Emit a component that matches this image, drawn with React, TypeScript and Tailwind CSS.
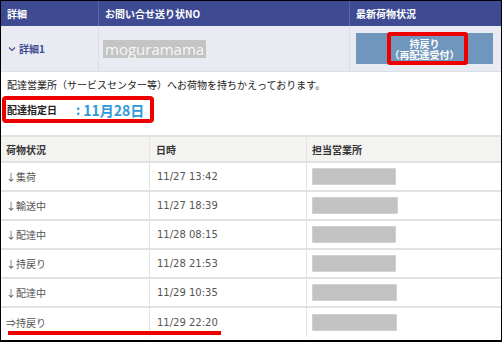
import React from 'react';

const rows = [
  { status: '↓集荷', time: '11/27 13:42', w: 84 },
  { status: '↓輸送中', time: '11/27 18:39', w: 86 },
  { status: '↓配達中', time: '11/28 08:15', w: 84 },
  { status: '↓持戻り', time: '11/28 21:53', w: 84 },
  { status: '↓配達中', time: '11/29 10:35', w: 85 },
  { status: '⇒持戻り', time: '11/29 22:20', w: 85 },
];

const App: React.FC = () => {
  return (
    <div
      className="w-[502px] h-[342px] border border-b-2 border-black bg-white overflow-hidden"
      style={{ fontFamily: '"Noto Sans CJK JP", "Noto Sans", sans-serif' }}
    >
      {/* summary table */}
      <div className="grid grid-cols-[98px_251px_1fr]">
        <div className="h-[25px] bg-[#3e4b92] border-r border-[#5865a6] text-white text-[10px] font-bold flex items-center pl-[6px]">詳細</div>
        <div className="h-[25px] bg-[#3e4b92] border-r border-[#5865a6] text-white text-[10px] font-bold flex items-center pl-[6px]">お問い合せ送り状NO</div>
        <div className="h-[25px] bg-[#3e4b92] text-white text-[10px] font-bold flex items-center pl-[6px]">最新荷物状況</div>

        <div className="h-[46px] bg-[#e9ebf3] border-r border-b border-[#dcdee6] flex items-center pl-[7px] gap-[3px] text-[10px] font-bold text-[#3e4b92]">
          <svg width="8" height="6" viewBox="0 0 8 6" fill="none" stroke="#3e4b92" strokeWidth="1.2">
            <path d="M1 1.5 L4 4.5 L7 1.5" />
          </svg>
          <span>詳細1</span>
        </div>
        <div className="h-[46px] bg-[#e9ebf3] border-r border-b border-[#dcdee6] flex items-center pl-[4px]">
          <span
            className="h-[18px] w-[103px] bg-[#c4c4c4] text-[#f7f7f7] text-[15px] leading-[18px] px-[2px]"
            style={{ fontFamily: '"Open Sans", "Noto Sans", sans-serif' }}
          >
            moguramama
          </span>
        </div>
        <div className="h-[46px] bg-[#e9ebf3] border-b border-[#dcdee6] flex items-center pl-[6px]">
          <div className="relative w-[137px] h-[31px] bg-[#6f97bd] flex flex-col items-center justify-center text-white text-[10px] font-bold leading-[11px]">
            <span>持戻り</span>
            <span>（再配達受付）</span>
            <div className="absolute left-[31px] top-0 w-[81px] h-[33px] -mt-[1px] border-[4px] border-[#ee0000] rounded-[3px]" />
          </div>
        </div>
      </div>

      {/* message */}
      <div className="pl-[6px] pt-[6px] text-[10px] text-[#222] leading-[14px] whitespace-nowrap">
        配達営業所（サービスセンター等）へお荷物を持ちかえっております。
      </div>
      <div className="ml-[1px] mt-[4px] w-[152px] h-[27px] border-[4px] border-[#ee0000] rounded-[4px] flex items-center pl-[1px] whitespace-nowrap">
        <span className="text-[10px] font-bold text-[#222] w-[69px] shrink-0">配達指定日</span>
        <span className="text-[13px] font-bold text-[#2f9ad9] leading-none">:</span>
        <span className="text-[14px] font-bold text-[#2f9ad9] ml-[3px] leading-none">11月28日</span>
      </div>

      {/* history table */}
      <div className="mt-[12px] grid grid-cols-[149px_157px_1fr] text-[10px]">
        <div className="h-[28px] bg-[#f3f3f1] border-t-2 border-b-2 border-r border-[#e2e2e0] flex items-center pl-[5px] font-bold text-[#333]">荷物状況</div>
        <div className="h-[28px] bg-[#f3f3f1] border-t-2 border-b-2 border-r border-[#e2e2e0] flex items-center pl-[6px] font-bold text-[#333]">日時</div>
        <div className="h-[28px] bg-[#f3f3f1] border-t-2 border-b-2 border-[#e2e2e0] flex items-center pl-[5px] font-bold text-[#333]">担当営業所</div>
        {rows.map((r, i) => (
          <React.Fragment key={i}>
            <div className={`h-[29px] border-r border-[#e2e2e0] flex items-center pl-[5px] text-[#555] ${i < rows.length - 1 ? 'border-b-2' : ''}`}>
              {r.status}
            </div>
            <div className={`h-[29px] border-r border-[#e2e2e0] flex items-center pl-[7px] text-[#555] ${i < rows.length - 1 ? 'border-b-2' : ''}`}>
              <span style={{ fontFamily: 'Tahoma, "DejaVu Sans", sans-serif' }} className="text-[10px]">{r.time}</span>
            </div>
            <div className={`h-[29px] border-[#e2e2e0] flex items-center pl-[5px] ${i < rows.length - 1 ? 'border-b-2' : ''}`}>
              <div className="h-[17px] bg-[#c2c2c2] border border-[#d2d2d2]" style={{ width: r.w }} />
            </div>
          </React.Fragment>
        ))}
      </div>
      <div className="-mt-[6px] ml-[7px] w-[213px] h-[4px] bg-[#ee0000] relative" />
    </div>
  );
};

export default App;
